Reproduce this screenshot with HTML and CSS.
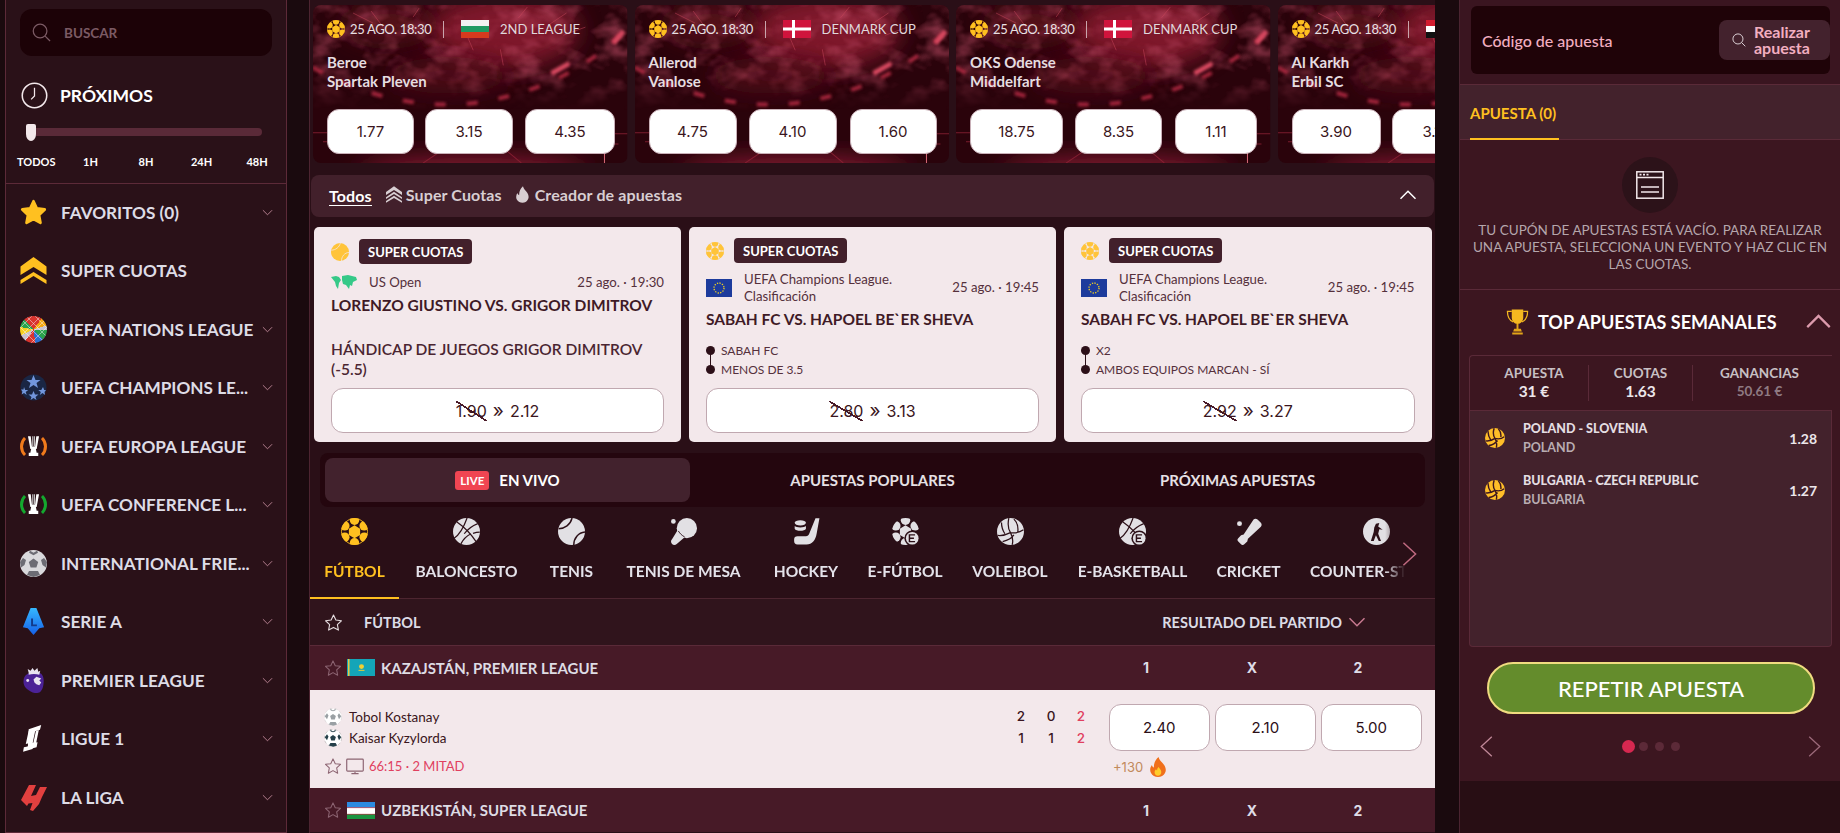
FILE: index.html
```
<!DOCTYPE html>
<html lang="es">
<head>
<meta charset="utf-8">
<title>Apuestas</title>
<link rel="stylesheet" href="styles.css">
</head>
<body>
<svg class="sprite" xmlns="http://www.w3.org/2000/svg">
  <defs>
    <filter id="b2" x="-20%" y="-20%" width="140%" height="140%"><feGaussianBlur stdDeviation="1.6"/></filter>
    <filter id="b12" x="-50%" y="-50%" width="200%" height="200%"><feGaussianBlur stdDeviation="12"/></filter>
    <filter id="cloud" x="0" y="0" width="100%" height="100%"><feTurbulence type="fractalNoise" baseFrequency=".035 .05" numOctaves="3" seed="7"/><feColorMatrix values="0 0 0 0 .6  0 0 0 0 .09  0 0 0 0 .16  2.2 0 0 0 -1"/></filter>
    <linearGradient id="shield" x1="0" y1="0" x2="0" y2="1"><stop offset="0" stop-color="#35b8ff"/><stop offset="1" stop-color="#1660e8"/></linearGradient>
    <linearGradient id="fadeg" x1="0" y1="0" x2="0" y2="1"><stop offset="0" stop-color="#fff"/><stop offset=".6" stop-color="#fff"/><stop offset="1" stop-color="#000"/></linearGradient>
    <mask id="fade"><rect width="314" height="105" fill="url(#fadeg)"/></mask>
    <clipPath id="ballclip"><circle cx="12" cy="12" r="12"/></clipPath>
  </defs>
  <symbol id="fw" viewBox="0 0 314 157" preserveAspectRatio="none">
    <rect width="314" height="157" fill="#2a030b"/>
    <ellipse cx="190" cy="25" rx="75" ry="38" fill="#8e1c30" filter="url(#b12)" opacity=".85"/>
    <ellipse cx="75" cy="18" rx="45" ry="18" fill="#661222" filter="url(#b12)" opacity=".8"/>
    <ellipse cx="135" cy="70" rx="60" ry="18" fill="#5c101e" filter="url(#b12)" opacity=".7"/>
    <ellipse cx="160" cy="168" rx="115" ry="16" fill="#8a1f34" filter="url(#b12)"/>
    <g mask="url(#fade)"><rect width="314" height="105" filter="url(#cloud)" opacity=".6"/></g>
    <path d="M0 62C60 96 120 104 170 96 230 86 282 58 314 22" fill="none" stroke="#b82c44" stroke-width="4" stroke-dasharray="11 21" filter="url(#b2)" opacity=".85"/>
    <path d="M238 68 256 58M300 38l10-12" stroke="#d84860" stroke-width="5" filter="url(#b2)"/>
    <path d="M60 18 40 8M70 22 58 6M100 12l6-9M205 13l9-11M235 20l18-12M250 30l22-8M160 45l-6-14M190 60l-3-16" stroke="#c8485c" stroke-width=".7" opacity=".7"/>
    <path d="M0 127H60M10 136H44M250 128H314M270 138H305M110 157l30-20M208 157l-24-20" stroke="#8e2236" stroke-width="1" opacity=".8"/>
    <path d="M291 146V157" stroke="#d86a78" stroke-width="1"/>
  </symbol>
  <symbol id="ball" viewBox="0 0 24 24">
    <g fill="currentColor" clip-path="url(#ballclip)">
      <polygon points="12,6.500 17,9.500 17,15 12,18 7,15 7,9.500"/>
      <circle cx="12" cy="2" r="4.200"/><circle cx="20.600" cy="7" r="4.200"/><circle cx="20.600" cy="17" r="4.200"/>
      <circle cx="12" cy="22" r="4.200"/><circle cx="3.400" cy="17" r="4.200"/><circle cx="3.400" cy="7" r="4.200"/>
    </g>
    <circle cx="12" cy="12" r="11.600" fill="none" stroke="currentColor" stroke-width=".8"/>
  </symbol>
  <symbol id="basket" viewBox="0 0 24 24">
    <circle cx="12" cy="12" r="12" fill="currentColor"/>
    <path d="M3.500 3.500C10 8 16 14 20.500 21M12.500 0C10 7 7 14 1 18M22 5C17 7 13 10 10 14M7 23c2-4 5-7 9-9M23.800 12.500c-2 0-4 .4-6 1.200" fill="none" stroke="#2c1018" stroke-width="1.100"/>
  </symbol>
  <symbol id="tennis" viewBox="0 0 24 24">
    <circle cx="12" cy="12" r="12" fill="currentColor"/>
    <path d="M.5 9.500C6 9.500 11 6 12.500 0M14 24c0-6 4-11 10-11.500" fill="none" stroke="#2c1018" stroke-width="1.300"/>
  </symbol>
  <symbol id="tennisy" viewBox="0 0 24 24">
    <circle cx="12" cy="12" r="12" fill="currentColor"/>
    <path d="M.5 9.500C6 9.500 11 6 12.500 0M14 24c0-6 4-11 10-11.500" fill="none" stroke="#f3e8eb" stroke-width="1"/>
  </symbol>
  <symbol id="volley" viewBox="0 0 24 24">
    <circle cx="12" cy="12" r="12" fill="currentColor"/>
    <path d="M10.500 .2C9.500 5 10 10 12 13 8 15 4 16 .6 15.500M12 13c4 .5 8 0 11.500-2.500M12 13c2 4 2.500 7.500 1.500 10.800M15 1c3 3 4 7 3.500 11M4 4c0 4 1 7 3 10M5 21c4-1 8-3 10-6" fill="none" stroke="#2c1018" stroke-width="1.100"/>
  </symbol>
  <symbol id="paddle" viewBox="0 0 24 24">
    <circle cx="3" cy="3" r="2.100" fill="currentColor"/>
    <circle cx="15" cy="9" r="9" fill="currentColor"/>
    <path d="M7 10.500L13 17 6 23c-1.300 1.200-3 1.200-4.200 0S.6 20 1.800 18.800z" fill="currentColor"/>
    <path d="M7.400 11.500C9 14 10.500 15.500 13 16.800" fill="none" stroke="#2c1018" stroke-width=".8"/>
  </symbol>
  <symbol id="hockey" viewBox="0 0 24 24">
    <path d="M20 .2h3.500L21 14c-.9 5.600-4 9.500-9 9.500H4c-2 0-3-1.200-3-3V19c0-1.800 1.100-2.800 3-2.800h7.500c1.500 0 2.400-.8 2.900-2.200z" fill="currentColor"/>
    <ellipse cx="6.500" cy="4.300" rx="5" ry="2.300" fill="currentColor"/><path d="M1.500 7.200c1 1.600 9 1.600 10 0V9.500c-1 2.400-9 2.400-10 0z" fill="currentColor"/>
  </symbol>
  <symbol id="efoot" viewBox="0 0 24 24">
    <g fill="currentColor" clip-path="url(#ballclip)">
      <polygon points="12,6.500 17,9.500 17,15 12,18 7,15 7,9.500"/>
      <circle cx="12" cy="2" r="4.200"/><circle cx="20.600" cy="7" r="4.200"/><circle cx="3.400" cy="17" r="4.200"/>
      <circle cx="12" cy="22" r="4.200"/><circle cx="3.400" cy="7" r="4.200"/>
    </g>
    <circle cx="18" cy="18" r="7" fill="#2c1018"/><circle cx="18" cy="18" r="5.600" fill="currentColor"/>
    <path d="M20.500 15h-5v6h5M15.500 18h4" fill="none" stroke="#2c1018" stroke-width="1.300"/>
  </symbol>
  <symbol id="ebasket" viewBox="0 0 24 24">
    <circle cx="12" cy="12" r="12" fill="currentColor"/>
    <path d="M3.500 3.500C10 8 16 14 20.500 21M12.500 0C10 7 7 14 1 18M22 5C17 7 13 10 10 14" fill="none" stroke="#2c1018" stroke-width="1.100"/>
    <circle cx="18" cy="18" r="7" fill="#2c1018"/><circle cx="18" cy="18" r="5.600" fill="currentColor"/>
    <path d="M20.500 15h-5v6h5M15.500 18h4" fill="none" stroke="#2c1018" stroke-width="1.300"/>
  </symbol>
  <symbol id="cricket" viewBox="0 0 24 24">
    <circle cx="4" cy="5" r="2.200" fill="currentColor"/>
    <path d="M16.500 1.300c1-.9 2.500-.9 3.500 0l3 3c.9 1 .9 2.500 0 3.500L11.500 18.500l-.6 2.300-2.900 2.700c-.7.700-1.700.7-2.400 0l-2.900-2.900c-.7-.7-.7-1.700 0-2.400l2.700-2.900 2.300-.6z" fill="currentColor"/>
  </symbol>
  <symbol id="cs" viewBox="0 0 24 24">
    <circle cx="12" cy="12" r="12" fill="currentColor"/>
    <path d="M11.500 5l3-.5-1 3 4 3-3-.6-1 4 2.500 6.500h-2l-2.500-5-2 5H7l2.500-8 .5-4z" fill="#2c1018"/>
  </symbol>
  <symbol id="volleyy" viewBox="0 0 24 24">
    <circle cx="12" cy="12" r="12" fill="currentColor"/>
    <path d="M11 .2C9.500 5 9.500 9 12 12.500 8.500 15 5 16 .8 15.500M12 12.500c4 1 8 .5 11-2M12 12.500c2 3.500 2.500 7.500 1.500 11M16 .8c2.500 3 3.500 6.500 3 10M3.800 3.800C3.500 7.500 4.500 11 7 14.500M4.500 21c4-.5 8-2.500 10.500-6" fill="none" stroke="#3c1620" stroke-width="1.700"/>
  </symbol>
  <symbol id="star" viewBox="0 0 24 24">
    <path d="M12 2.500l3 6.400 7 .9-5.100 4.800 1.300 7-6.200-3.400-6.200 3.400 1.300-7L2 9.800l7-.9z" fill="none" stroke="currentColor" stroke-width="1.400" stroke-linejoin="round"/>
  </symbol>
  <symbol id="starfill" viewBox="0 0 24 24">
    <path d="M12 2l3 6.400 7 .9-5.100 4.900 1.300 7L12 17.800l-6.200 3.400 1.300-7L2 9.300l7-.9z" fill="#ffc020" stroke="#ffc020" stroke-width="2.400" stroke-linejoin="round"/>
  </symbol>
  <symbol id="chev" viewBox="0 0 24 24">
    <path d="M2 7l10 10L22 7" fill="none" stroke="currentColor" stroke-width="2"/>
  </symbol>
  <symbol id="chevr" viewBox="0 0 16 26">
    <path d="M1.500 1l13 12-13 12" fill="none" stroke="currentColor" stroke-width="1.600"/>
  </symbol>
  <symbol id="chevl" viewBox="0 0 16 26">
    <path d="M14.500 1L1.500 13l13 12" fill="none" stroke="currentColor" stroke-width="1.600"/>
  </symbol>
  <symbol id="search" viewBox="0 0 20 20">
    <circle cx="8.500" cy="8.500" r="7.200" fill="none" stroke="currentColor" stroke-width="1.300"/><path d="M13.800 13.800L19 19" stroke="currentColor" stroke-width="1.300"/>
  </symbol>
  <symbol id="clock" viewBox="0 0 28 28">
    <circle cx="14" cy="14" r="12.700" fill="none" stroke="currentColor" stroke-width="1.600"/>
    <path d="M14 6v8.500l-3.500 3.500" fill="none" stroke="currentColor" stroke-width="1.300"/>
  </symbol>
  <symbol id="super" viewBox="0 0 26 27">
    <path d="M0 9.500L13 0l13 9.500V18L13 10 0 18z" fill="currentColor"/><path d="M0 23L13 15l13 8v4L13 19 0 27z" fill="currentColor"/>
  </symbol>
  <symbol id="superlt" viewBox="0 0 26 27">
    <path d="M0 9.500L13 0l13 9.500v5L13 6 0 14.500z" fill="currentColor"/><path d="M0 18L13 9l13 9v3L13 12.500 0 21zM0 24L13 15.500l13 8.500v3L13 19 0 27z" fill="currentColor"/>
  </symbol>
  <symbol id="flame" viewBox="0 0 14 18">
    <path d="M7.500 0c.5 3 3 4.500 4.800 7.500 1.500 2.700 1.700 5 .5 7C11.600 16.800 9.500 18 7 18s-4.700-1.200-6-3.300c-1.300-2.300-1-5 .6-7.200.3 1.200 1 2 1.800 2.300C3.200 6 4.700 2.500 7.500 0z" fill="currentColor"/>
  </symbol>
  <symbol id="world" viewBox="0 0 26 15">
    <path d="M0 2l5-1 3 1 2 3-2 3-1 6-2-3-1-4zM11 1l6-1 8 2 1 3-4 2-1 4-2-1-1 4-3-4-3-1-1-4z" fill="#35c988"/>
  </symbol>
  <symbol id="fbg" viewBox="0 0 28 18" preserveAspectRatio="none"><rect width="28" height="6" fill="#f2f2f2"/><rect y="6" width="28" height="6" fill="#1f9a62"/><rect y="12" width="28" height="6" fill="#d63a1e"/></symbol>
  <symbol id="fdk" viewBox="0 0 28 18" preserveAspectRatio="none"><rect width="28" height="18" fill="#d0143c"/><rect x="9" width="3" height="18" fill="#fff"/><rect y="7.500" width="28" height="3" fill="#fff"/></symbol>
  <symbol id="fiq" viewBox="0 0 28 18" preserveAspectRatio="none"><rect width="28" height="6" fill="#d41c30"/><rect y="6" width="28" height="6" fill="#fff"/><rect y="12" width="28" height="6" fill="#111"/></symbol>
  <symbol id="feu" viewBox="0 0 26 18" preserveAspectRatio="none"><rect width="26" height="18" fill="#1d3b9c"/><circle cx="13" cy="9" r="5" fill="none" stroke="#f0d020" stroke-width="1.300" stroke-dasharray="1.300 1.300"/></symbol>
  <symbol id="fkz" viewBox="0 0 28 18" preserveAspectRatio="none"><rect width="28" height="18" fill="#14a5b8"/><rect x="1" width="1.500" height="18" fill="#e8c840"/><circle cx="14.500" cy="8" r="2.500" fill="#f2d030"/><path d="M11.500 12h6" stroke="#f2d030"/></symbol>
  <symbol id="fuz" viewBox="0 0 28 18" preserveAspectRatio="none"><rect width="28" height="6" fill="#2b8ae0"/><rect y="6" width="28" height="7" fill="#fff"/><rect y="13" width="28" height="5" fill="#1a9440"/><path d="M0 6h28M0 13h28" stroke="#c62838" stroke-width=".6"/></symbol>
  <symbol id="tlight" viewBox="0 0 24 24">
    <circle cx="12" cy="12" r="11.500" fill="#fff" stroke="#ccc" stroke-width=".6" stroke-dasharray="4 3"/>
    <polygon points="12,8 15.800,10.800 14.400,15.200 9.600,15.200 8.200,10.800" fill="#9aa0a4"/><path d="M8 .8l4 2.400 4-2.400-1 2.400-3 1-3-1zM1 11l3-4 2 3-2 5zM23 11l-3-4-2 3 2 5zM6.500 22l2-3.500h7l2 3.500-5.500 1.500z" fill="#9aa0a4"/>
  </symbol>
  <symbol id="tdark" viewBox="0 0 24 24">
    <circle cx="12" cy="12" r="11.500" fill="#fff" stroke="#999" stroke-width=".6" stroke-dasharray="4 3"/>
    <polygon points="12,8 15.800,10.800 14.400,15.200 9.600,15.200 8.200,10.800" fill="#25404a"/><path d="M8 .8l4 2.400 4-2.400-1 2.400-3 1-3-1zM1 11l3-4 2 3-2 5zM23 11l-3-4-2 3 2 5zM6.500 22l2-3.500h7l2 3.500-5.500 1.500z" fill="#25404a"/>
  </symbol>
  <symbol id="tv" viewBox="0 0 20 18">
    <rect x=".8" y=".8" width="18.400" height="13.400" rx="1" fill="none" stroke="currentColor" stroke-width="1.300"/><path d="M6 17h8M10 15v2" stroke="currentColor" stroke-width="1.300"/>
  </symbol>
  <symbol id="fire" viewBox="0 0 16 20">
    <path d="M8.500 0c.8 3.400 3.600 5 5.800 8.300 1.800 3 1.900 5.700.7 7.800C13.700 18.600 11 20 8 20s-5.700-1.400-7-3.900C-.4 13.500 0 10.500 1.900 8c.3 1.400 1.100 2.300 2 2.600C3.600 6.500 5.400 2.700 8.500 0z" fill="#f0701c"/>
    <path d="M8.500 10c.8 1.600 2.800 2.500 2.800 5 0 2.200-1.500 3.800-3.400 3.800S4.600 17.300 4.600 15.300c0-1.300.7-2.400 1.500-3 .2.700.5 1 1 1.100 0-1.300.5-2.500 1.400-3.400z" fill="#ffcd2a"/>
  </symbol>
  <symbol id="slip" viewBox="0 0 28 28">
    <rect x=".8" y=".8" width="26.400" height="26.400" fill="none" stroke="currentColor" stroke-width="1.500"/>
    <path d="M1 6.500h26M5 16h18M5 21h18" stroke="currentColor" stroke-width="1.400"/><path d="M3.500 3.700h2M7 3.700h2M10.500 3.700h2" stroke="currentColor" stroke-width="1.800"/>
  </symbol>
  <symbol id="trophy" viewBox="0 0 24 28">
    <path d="M6 1h12v8c0 4-2.500 7-6 7S6 13 6 9z" fill="#f5b820"/>
    <path d="M6 3H1.500c0 5 1.500 9 6 11M18 3h4.500c0 5-1.500 9-6 11" fill="none" stroke="#f5b820" stroke-width="1.300"/>
    <path d="M11 16h2v5h-2zM8.500 21h7l1 3h-9zM6.500 25h11v2h-11z" fill="#e2a418"/>
  </symbol>
  <symbol id="t-white" viewBox="0 0 24 28">
    <path d="M5 1h3.500l1.500 13h4l1.500-13H19l-3 16H8z" fill="#fff"/><path d="M10.500 1h1.200v13h-1.200zM12.500 1h1.200v13h-1.200z" fill="#e0e0e0"/>
    <path d="M9 17h6l1 5h2v4H6v-4h2z" fill="#fff"/>
  </symbol>
  <symbol id="i-ucl" viewBox="0 0 27 27">
    <circle cx="13.500" cy="13.500" r="13" fill="#1a2644"/>
    <path d="M13.500 1l2 5h5l-4 3 1.500 5-4.500-3-4.500 3 1.500-5-4-3h5zM4 13l1.200 3h3l-2.500 2 1 3-2.700-2-2.400 1.500.8-3L1 15.500h2.500zM23 13l1.200 3h1.800l-1.500 2 .6 3-2.600-2-2.700 2 1-3-2.500-2h3zM13.500 17l1.500 3.500h3.500L15.500 23l1 3-3-2-3 2 1-3-3-2.500h3.500z" fill="#7296dc"/>
  </symbol>
  <symbol id="i-intl" viewBox="0 0 27 27">
    <circle cx="13.500" cy="13.500" r="13.500" fill="#d9d9dc"/>
    <path d="M13.500 8.500l4.700 3.400-1.800 5.600h-5.800l-1.800-5.600zM10 .7l3.500 2 3.500-2 1 2-4.500 2.500L9 2.700zM0 12l3-4 3 2-1.500 5-3.500 2.500zM27 12l-3-4-3 2 1.500 5 3.500 2.500zM7 25l2-4h9l2 4-6.500 2z" fill="#6c6c74"/>
  </symbol>
  <symbol id="i-serie" viewBox="0 0 24 28">
    <path d="M9 0h6l8 20-5 1-6 7-6-7-5-1z" fill="url(#shield)"/>
    <path d="M10.500 11v7h5" fill="none" stroke="#123a8a" stroke-width="2"/>
  </symbol>
  <symbol id="i-prem" viewBox="0 0 24 28">
    <path d="M6 7c3-2 10-3 14 0 3 3 3 8 2 13-1 4-3 7-6 7-4 0-6-1-9-3C2 21 1 17 2 12c.5-2 2-4 4-5z" fill="#4b2296"/>
    <path d="M7 6L6 2l3 2 2-3 2 3 3-3 1 4 2-1-1 4c-3-1-8-1-11 0zM15 10l5 2-2 2 2 2-2 3-3-1-2-2-1-3z" fill="#e8e4f0"/><circle cx="6" cy="14" r="1.500" fill="#e8e4f0"/>
  </symbol>
  <symbol id="i-ligue" viewBox="0 0 20 28">
    <path d="M5 4.500L18 0l-1.300 5-5 1.500-2.500 12 5-.5-1 5-4 1-6 1.600 1-4z" fill="#fff"/>
    <path d="M5 6l3-.8L5 19l-3 .8zM12.500 6.300l3-1-2.800 13.500-3 .3zM0 23l10-2-1 4-9.800 2.800z" fill="#fff"/>
  </symbol>
  <symbol id="i-liga" viewBox="0 0 27 27">
    <path d="M9 1h7l-5 11 5-1 4-8h7l-5 10-3 7-6 7-3-1 2.500-7-4 .5-1.500 2.500-3-3-3-3z" fill="#e2403f"/>
  </symbol>
</svg>

<div class="app">
  <aside class="sidebar">
    <div class="search"><svg class="i-search"><use href="#search"/></svg><span>BUSCAR</span></div>
    <div class="soon">
      <div class="soon-head"><svg class="i-clock"><use href="#clock"/></svg><strong>PRÓXIMOS</strong></div>
      <div class="track"><span class="thumb"></span></div>
      <div class="ticks"><span>TODOS</span><span>1H</span><span>8H</span><span>24H</span><span>48H</span></div>
    </div>
    <nav class="menu">
      <a class="menu-row"><svg class="m-icon"><use href="#starfill"/></svg><span>FAVORITOS (0)</span><svg class="m-chev"><use href="#chev"/></svg></a>
      <a class="menu-row"><svg class="m-icon m-yellow"><use href="#super"/></svg><span>SUPER CUOTAS</span></a>
      <a class="menu-row"><i class="m-icon nations"></i><span>UEFA NATIONS LEAGUE</span><svg class="m-chev"><use href="#chev"/></svg></a>
      <a class="menu-row"><svg class="m-icon"><use href="#i-ucl"/></svg><span>UEFA CHAMPIONS LE...</span><svg class="m-chev"><use href="#chev"/></svg></a>
      <a class="menu-row"><i class="m-icon hexring"><svg><use href="#t-white"/></svg></i><span>UEFA EUROPA LEAGUE</span><svg class="m-chev"><use href="#chev"/></svg></a>
      <a class="menu-row"><i class="m-icon greenring"><svg><use href="#t-white"/></svg></i><span>UEFA CONFERENCE L...</span><svg class="m-chev"><use href="#chev"/></svg></a>
      <a class="menu-row"><svg class="m-icon"><use href="#i-intl"/></svg><span>INTERNATIONAL FRIE...</span><svg class="m-chev"><use href="#chev"/></svg></a>
      <a class="menu-row"><svg class="m-icon"><use href="#i-serie"/></svg><span>SERIE A</span><svg class="m-chev"><use href="#chev"/></svg></a>
      <a class="menu-row"><svg class="m-icon"><use href="#i-prem"/></svg><span>PREMIER LEAGUE</span><svg class="m-chev"><use href="#chev"/></svg></a>
      <a class="menu-row"><svg class="m-icon"><use href="#i-ligue"/></svg><span>LIGUE 1</span><svg class="m-chev"><use href="#chev"/></svg></a>
      <a class="menu-row"><svg class="m-icon"><use href="#i-liga"/></svg><span>LA LIGA</span><svg class="m-chev"><use href="#chev"/></svg></a>
    </nav>
  </aside>

  <main class="main">
    <section class="hero-row">
      <article class="hero w1">
        <svg class="hero-bg"><use href="#fw"/></svg>
        <div class="hero-meta"><svg class="h-ball"><use href="#ball"/></svg><span class="h-date">25 AGO. 18:30</span><i class="h-sep"></i><svg class="h-flag"><use href="#fbg"/></svg><span class="h-lg">2ND LEAGUE</span></div>
        <div class="hero-teams">Beroe<br>Spartak Pleven</div>
        <div class="hero-odds"><button class="o1">1.77</button><button class="o2">3.15</button><button class="o3">4.35</button></div>
      </article>
      <article class="hero w2">
        <svg class="hero-bg"><use href="#fw"/></svg>
        <div class="hero-meta"><svg class="h-ball"><use href="#ball"/></svg><span class="h-date">25 AGO. 18:30</span><i class="h-sep"></i><svg class="h-flag"><use href="#fdk"/></svg><span class="h-lg">DENMARK CUP</span></div>
        <div class="hero-teams">Allerod<br>Vanlose</div>
        <div class="hero-odds"><button class="o1">4.75</button><button class="o2">4.10</button><button class="o3">1.60</button></div>
      </article>
      <article class="hero w3">
        <svg class="hero-bg"><use href="#fw"/></svg>
        <div class="hero-meta"><svg class="h-ball"><use href="#ball"/></svg><span class="h-date">25 AGO. 18:30</span><i class="h-sep"></i><svg class="h-flag"><use href="#fdk"/></svg><span class="h-lg">DENMARK CUP</span></div>
        <div class="hero-teams">OKS Odense<br>Middelfart</div>
        <div class="hero-odds"><button class="o4">18.75</button><button class="o5">8.35</button><button class="o6">1.11</button></div>
      </article>
      <article class="hero w4">
        <svg class="hero-bg"><use href="#fw"/></svg>
        <div class="hero-meta"><svg class="h-ball"><use href="#ball"/></svg><span class="h-date">25 AGO. 18:30</span><i class="h-sep"></i><svg class="h-flag"><use href="#fiq"/></svg></div>
        <div class="hero-teams">Al Karkh<br>Erbil SC</div>
        <div class="hero-odds"><button class="o7">3.90</button><button class="o7">3.15</button></div>
      </article>
    </section>

    <div class="filter-bar">
      <a class="f-item f-active">Todos</a>
      <a class="f-item"><svg class="f-super"><use href="#superlt"/></svg>Super Cuotas</a>
      <a class="f-item"><svg class="f-flame"><use href="#flame"/></svg>Creador de apuestas</a>
      <svg class="f-up"><use href="#chev"/></svg>
    </div>

    <section class="promos">
      <article class="promo p-short">
        <div class="promo-head"><svg class="p-sport"><use href="#tennisy"/></svg><span class="badge">SUPER CUOTAS</span></div>
        <div class="promo-meta"><svg class="p-world"><use href="#world"/></svg><span class="p-league">US Open</span><span class="p-date">25 ago. · 19:30</span></div>
        <h3 class="p-title">LORENZO GIUSTINO VS. GRIGOR DIMITROV</h3>
        <p class="p-bet">HÁNDICAP DE JUEGOS GRIGOR DIMITROV<br>(-5.5)</p>
        <button class="p-btn"><s class="old">1.90</s><b class="gt">»</b>2.12</button>
      </article>
      <article class="promo">
        <div class="promo-head"><svg class="p-sport"><use href="#ball"/></svg><span class="badge">SUPER CUOTAS</span></div>
        <div class="promo-meta"><svg class="p-flag"><use href="#feu"/></svg><span class="p-league">UEFA Champions League.<br>Clasificación</span><span class="p-date">25 ago. · 19:45</span></div>
        <h3 class="p-title">SABAH FC VS. HAPOEL BE`ER SHEVA</h3>
        <ul class="legs"><li>SABAH FC</li><li>MENOS DE 3.5</li></ul>
        <button class="p-btn"><s class="old">2.80</s><b class="gt">»</b>3.13</button>
      </article>
      <article class="promo">
        <div class="promo-head"><svg class="p-sport"><use href="#ball"/></svg><span class="badge">SUPER CUOTAS</span></div>
        <div class="promo-meta"><svg class="p-flag"><use href="#feu"/></svg><span class="p-league">UEFA Champions League.<br>Clasificación</span><span class="p-date">25 ago. · 19:45</span></div>
        <h3 class="p-title">SABAH FC VS. HAPOEL BE`ER SHEVA</h3>
        <ul class="legs"><li>X2</li><li>AMBOS EQUIPOS MARCAN - SÍ</li></ul>
        <button class="p-btn"><s class="old">2.92</s><b class="gt">»</b>3.27</button>
      </article>
    </section>

    <div class="tabs">
      <a class="tab tab-on"><span class="live">LIVE</span>EN VIVO</a>
      <a class="tab">APUESTAS POPULARES</a>
      <a class="tab">PRÓXIMAS APUESTAS</a>
    </div>

    <div class="sports-wrap">
      <div class="sports">
        <a class="sport sport-on"><svg><use href="#ball"/></svg><span>FÚTBOL</span></a>
        <a class="sport"><svg><use href="#basket"/></svg><span>BALONCESTO</span></a>
        <a class="sport"><svg><use href="#tennis"/></svg><span>TENIS</span></a>
        <a class="sport"><svg><use href="#paddle"/></svg><span>TENIS DE MESA</span></a>
        <a class="sport"><svg><use href="#hockey"/></svg><span>HOCKEY</span></a>
        <a class="sport"><svg><use href="#efoot"/></svg><span>E-FÚTBOL</span></a>
        <a class="sport"><svg><use href="#volley"/></svg><span>VOLEIBOL</span></a>
        <a class="sport"><svg><use href="#ebasket"/></svg><span>E-BASKETBALL</span></a>
        <a class="sport"><svg><use href="#cricket"/></svg><span>CRICKET</span></a>
        <a class="sport"><svg><use href="#cs"/></svg><span>COUNTER-STRIKE</span></a>
      </div>
      <svg class="sports-next"><use href="#chevr"/></svg>
    </div>

    <div class="list-head">
      <svg class="lh-star"><use href="#star"/></svg><span class="lh-name">FÚTBOL</span>
      <span class="lh-market">RESULTADO DEL PARTIDO</span><svg class="lh-chev"><use href="#chev"/></svg>
    </div>

    <div class="league">
      <svg class="lg-star"><use href="#star"/></svg><svg class="lg-flag"><use href="#fkz"/></svg><span class="lg-name">KAZAJSTÁN, PREMIER LEAGUE</span>
      <div class="lg-cols"><span>1</span><span>X</span><span>2</span></div>
    </div>

    <div class="match">
      <div class="m-left">
        <div class="team"><svg><use href="#tlight"/></svg>Tobol Kostanay</div>
        <div class="team"><svg><use href="#tdark"/></svg>Kaisar Kyzylorda</div>
        <div class="m-status"><svg class="st-star"><use href="#star"/></svg><svg class="st-tv"><use href="#tv"/></svg><span>66:15 · 2 MITAD</span></div>
      </div>
      <div class="scores">
        <span>2</span><span>0</span><span class="red">2</span>
        <span>1</span><span>1</span><span class="red">2</span>
      </div>
      <div class="m-right">
        <div class="m-odds"><button class="odd">2.40</button><button class="odd">2.10</button><button class="odd">5.00</button></div>
        <div class="more">+130<svg><use href="#fire"/></svg></div>
      </div>
    </div>

    <div class="league">
      <svg class="lg-star"><use href="#star"/></svg><svg class="lg-flag"><use href="#fuz"/></svg><span class="lg-name">UZBEKISTÁN, SUPER LEAGUE</span>
      <div class="lg-cols"><span>1</span><span>X</span><span>2</span></div>
    </div>
  </main>

  <aside class="slip">
    <div class="code-sec">
      <div class="code-box">
        <span class="code-label">Código de apuesta</span>
        <button class="code-btn"><svg><use href="#search"/></svg><span>Realizar<br>apuesta</span></button>
      </div>
    </div>
    <div class="slip-tabs"><a class="slip-tab">APUESTA (0)</a></div>
    <div class="panel">
      <div class="empty">
        <div class="empty-circle"><svg><use href="#slip"/></svg></div>
        <p>TU CUPÓN DE APUESTAS ESTÁ VACÍO. PARA REALIZAR<br>UNA APUESTA, SELECCIONA UN EVENTO Y HAZ CLIC EN<br>LAS CUOTAS.</p>
      </div>
      <div class="top-head"><svg class="trophy"><use href="#trophy"/></svg><h2>TOP APUESTAS SEMANALES</h2><svg class="top-chev"><use href="#chev"/></svg></div>
      <div class="stats">
        <div class="stat"><small>APUESTA</small><b>31 €</b></div>
        <div class="stat"><small>CUOTAS</small><b>1.63</b></div>
        <div class="stat"><small>GANANCIAS</small><em>50.61 €</em></div>
      </div>
      <div class="picks">
        <div class="pick"><svg><use href="#volleyy"/></svg><div class="pick-txt"><strong>POLAND - SLOVENIA</strong><span>POLAND</span></div><b>1.28</b></div>
        <div class="pick"><svg><use href="#volleyy"/></svg><div class="pick-txt"><strong>BULGARIA - CZECH REPUBLIC</strong><span>BULGARIA</span></div><b>1.27</b></div>
      </div>
      <button class="repeat">REPETIR APUESTA</button>
      <div class="pager">
        <svg class="pg-arrow pg-l"><use href="#chevl"/></svg>
        <div class="dots"><i class="dot dot-on"></i><i class="dot"></i><i class="dot"></i><i class="dot"></i></div>
        <svg class="pg-arrow pg-r"><use href="#chevr"/></svg>
      </div>
    </div>
  </aside>
</div>
</body>
</html>
```
FILE: styles.css
```
* { box-sizing: border-box; margin: 0; padding: 0; }
html, body { width: 1840px; height: 833px; overflow: hidden; }
body { background: #1a0a0e; font-family: "Lato", "Noto Sans", sans-serif; color: #e0dce2; }
a { display: flex; }
button { font-family: inherit; cursor: pointer; }
svg { display: block; }
.sprite { position: absolute; width: 0; height: 0; overflow: hidden; }

.app { display: grid; grid-template-columns: 282px 1148px 405px; width: 1840px; height: 833px; padding-left: 5px; }
.main { margin-left: 22px; width: 1126px; background: #2a0f17; border-left: 1px solid #4c2430; height: 833px; overflow: hidden; }

/* sidebar */
.sidebar { width: 282px; height: 833px; background: #2a1118; border: 1px solid #5c2a38; border-top: 0; overflow: hidden; }
.search { display: flex; align-items: center; margin: 9px 14px 0 14px; height: 47px; background: #1c0207; border-radius: 12px; padding-left: 12px; color: #7b5a64; font-size: 13.5px; font-weight: 700; }
.i-search { width: 19px; height: 19px; margin-right: 13px; }
.soon { height: 128px; padding: 26px 0 0 15px; border-bottom: 1px solid #5c2a38; }
.soon-head { display: flex; align-items: center; gap: 12px; color: #fff; height: 27px; }
.i-clock { width: 27px; height: 27px; color: #f3e8eb; }
.soon-head strong { font-weight: 700; font-size: 17.5px; }
.track { position: relative; margin: 19px 0 0 9px; width: 232px; height: 8px; border-radius: 4px; background: #5a2a38; }
.thumb { position: absolute; left: -4px; top: -4px; width: 10px; height: 17px; background: #f3e8eb; border-radius: 2px 2px 5px 5px / 2px 2px 7px 7px; }
.ticks { display: flex; justify-content: space-between; margin: 19px 0 0 -4px; width: 258px; color: #fff; font-size: 11px; font-weight: 700; line-height: 14px; }
.ticks span { width: 36px; text-align: center; }
.menu { display: block; margin-top: -1px; }
.menu-row { align-items: center; height: 58.5px; padding-left: 14px; font-size: 17.2px; font-weight: 700; color: #dedce6; white-space: nowrap; }
.menu-row span { margin-left: 14px; flex: 1; }
.m-icon { width: 27px; height: 27px; flex: none; display: block; }
.m-yellow { color: #ffc020; }
.m-chev { width: 11px; height: 11px; color: #c08898; margin-right: 13px; flex: none; }
.nations { border-radius: 50%; background: repeating-linear-gradient(45deg, transparent 0 5px, rgba(255,255,255,.45) 5px 6px), repeating-linear-gradient(-45deg, transparent 0 5px, rgba(255,255,255,.45) 5px 6px), conic-gradient(#d8342e 0 10%, #f5a812 0 20%, #c9c4d0 0 26%, #2aa24c 0 38%, #2b6fd0 0 48%, #d8342e 0 60%, #c9c4d0 0 68%, #f5d022 0 78%, #2aa24c 0 88%, #d8342e 0); }
.hexring { border: 3px solid #f07a1c; border-radius: 50%; border-top-color: transparent; border-bottom-color: transparent; }
.greenring { border: 3px solid #14a82e; border-radius: 50%; border-top-color: transparent; border-bottom-color: transparent; }
.hexring svg, .greenring svg { width: 19px; height: 27px; margin: -3px 0 0 1px; }

/* hero */
.hero-row { display: flex; gap: 7px; padding: 5px 0 0 3px; height: 175px; width: 1125px; overflow: hidden; }
.hero { position: relative; flex: none; height: 158px; border-radius: 8px; overflow: hidden; width: 314.5px; padding: 15px 0 0 14px; }
.hero-bg { position: absolute; left: 0; top: 0; width: 100%; height: 100%; }
.hero > div { position: relative; }
.hero-meta { display: flex; align-items: center; height: 18px; white-space: nowrap; }
.h-ball { width: 18px; height: 18px; color: #ffc020; flex: none; }
.h-date { margin-left: 5px; font-size: 13px; letter-spacing: -.35px; color: #e8e0e3; width: 81px; flex: none; }
.h-sep { width: 1px; height: 17px; background: #c9a5ad; margin-left: 12px; flex: none; }
.h-flag { width: 28px; height: 18px; margin-left: 17px; flex: none; }
.h-lg { margin-left: 11px; font-size: 13px; color: #e0d8dc; }
.hero-teams { margin-top: 15px; font-size: 15px; line-height: 19px; font-weight: 700; color: #e6dde0; }
.hero-odds { display: flex; position: absolute !important; top: 104px; left: 14px; }
.hero-odds button { flex: none; height: 45px; background: #fff; border: 1px solid #c9b0b8; border-radius: 12px; font-family: "Inter", sans-serif; font-size: 15px; color: #3a1520; }
.o1 { width: 87px; } .o2 { width: 88px; margin-left: 11px; } .o3 { width: 90px; margin-left: 12px; }
.w2 .o1 { width: 88px; } .w2 .o2 { width: 88px; margin-left: 12px; } .w2 .o3 { width: 87px; margin-left: 13px; }
.o4 { width: 93px; } .o5 { width: 87px; margin-left: 12px; } .o6 { width: 82px; margin-left: 13px; }
.o7 { width: 89px; margin-right: 11px; }

/* filter bar */
.filter-bar { display: flex; align-items: center; margin: 0 1px; height: 42px; background: #42202b; border-radius: 8px; padding: 0 0 3px 18px; }
.f-item { align-items: center; color: #d8ced2; font-size: 16px; letter-spacing: .12px; font-weight: 700; margin-right: 14px; white-space: nowrap; }
.f-active { color: #fff; border-bottom: 1px solid #fff; height: 21px; margin-top: 2px; }
.f-super { width: 16px; height: 17px; margin-right: 4px; }
.f-flame { width: 13px; height: 17px; margin-right: 6px; }
.f-up { width: 18px; height: 18px; margin-left: auto; margin-right: 17px; color: #fff; transform: rotate(180deg); }

/* promos */
.promos { display: flex; gap: 8px; padding: 10px 0 0 4px; height: 236px; }
.promo { display: flex; flex-direction: column; width: 367px; height: 215px; background: #f3e8eb; border-radius: 5px; padding: 11px 17px 9px; color: #3a1520; }
.promo:last-child { width: 367.5px; }
.promo-head { display: flex; align-items: center; gap: 10px; height: 25px; flex: none; }
.p-short .promo-head { margin-top: 1px; }
.p-sport { width: 18px; height: 18px; color: #ffc43a; }
.badge { display: flex; align-items: center; height: 25px; padding: 0 9px; background: #42202b; color: #fff; font-size: 13px; font-weight: 700; border-radius: 4px; }
.promo-meta { display: flex; align-items: center; flex: none; margin-top: 7px; height: 35px; font-size: 13.2px; color: #55303c; line-height: 17px; }
.p-short .promo-meta { margin-top: 6px; height: 24px; }
.p-world { width: 26px; height: 15px; margin-right: 12px; }
.p-flag { width: 26px; height: 18px; margin-right: 12px; }
.p-date { margin-left: auto; }
.p-title { flex: none; margin-top: 3px; font-size: 15.5px; line-height: 22px; font-weight: 700; white-space: nowrap; color: #3f1a26; }
.p-short .p-title { margin-top: 0; }
.p-bet { margin-top: 23px; font-size: 15.5px; line-height: 20px; font-weight: 600; color: #4a2531; }
.legs { list-style: none; margin-top: 11px; font-size: 12px; line-height: 19px; color: #55303c; }
.legs li { position: relative; padding-left: 15px; }
.legs li::before { content: ""; position: absolute; left: 0; top: 5px; width: 9px; height: 9px; border-radius: 50%; background: #2c0f18; }
.legs li:first-child::after { content: ""; position: absolute; left: 4px; top: 10px; width: 1px; height: 19px; background: #2c0f18; }
.p-btn { flex: none; margin-top: auto; height: 45px; background: #fff; border: 1px solid #c0a8b0; border-radius: 12px; font-size: 16px; color: #3a1520; font-family: "Inter", sans-serif; }
.old { text-decoration: none; background: linear-gradient(to top right, transparent 47%, #4a1a28 47% 52%, transparent 52%); }
.gt { display: inline-block; font-weight: 400; font-size: 19px; line-height: 16px; margin: 0 6px; }

/* tabs */
.tabs { display: grid; grid-template-columns: 365px 365px 365px; margin: 0 0 0 10px; width: 1105px; height: 54px; padding: 5px; background: #24060e; border-radius: 8px; }
.tab { align-items: center; justify-content: center; font-size: 15px; font-weight: 700; color: #e6e0e4; border-radius: 8px; }
.tab-on { background: #42222d; color: #fff; }
.live { display: flex; align-items: center; justify-content: center; width: 34px; height: 19px; margin-right: 10px; background: #f04552; border-radius: 3px; font-size: 11.5px; color: #fff; font-weight: 700; }

/* sports */
.sports-wrap { position: relative; height: 92px; border-bottom: 1px solid #4d2530; }
.sports { display: grid; grid-template-columns: 89px 135px 75px 149px 96px 102px 108px 137px 95px 160px; width: 1095px; overflow: hidden; -webkit-mask-image: linear-gradient(to right, #000 1075px, transparent 1095px); mask-image: linear-gradient(to right, #000 1075px, transparent 1095px); height: 92px; }
.sport { flex-direction: column; align-items: center; padding-top: 11px; height: 91px; color: #e4e2ea; font-size: 15.5px; font-weight: 700; white-space: nowrap; }
.sport svg { width: 27px; height: 27px; color: #e2e0e4; margin-bottom: 17px; }
.sport-on { color: #ffc020; box-shadow: inset 0 -2px 0 #ffc020; height: 92px; }
.sport-on svg { color: #ffc020; }
.sports-next { position: absolute; right: 18px; top: 34px; width: 15px; height: 26px; color: #c06a80; }

/* list head */
.list-head { display: flex; align-items: center; height: 46px; background: #30141c; padding: 0 0 0 14px; font-size: 14.5px; font-weight: 700; color: #dcdce6; }
.lh-star { width: 19px; height: 19px; color: #e6dde0; }
.lh-name { margin-left: 21px; }
.lh-market { margin-left: auto; }
.lh-chev { width: 18px; height: 18px; color: #c87a90; margin: 0 69px 0 6px; }

/* league */
.league { display: flex; align-items: center; height: 45px; background: #471a27; padding: 0 0 1px 14px; border-top: 1px solid #5a2a38; }
.league:last-child { border-top: 0; height: 44px; padding-bottom: 0; }
.lg-star { width: 18px; height: 18px; color: #8c6472; }
.lg-flag { width: 28px; height: 17px; margin-left: 5px; }
.lg-name { margin-left: 6px; font-size: 15px; font-weight: 700; color: #dedce4; white-space: nowrap; }
.lg-cols { display: grid; grid-template-columns: 106px 106px 106px; margin-left: auto; margin-right: 24px; font-family: "Inter", sans-serif; font-size: 14px; font-weight: 700; text-align: center; color: #dedce6; }

/* match */
.match { display: flex; height: 98px; background: #f3e8eb; padding-left: 14px; color: #3a1520; }
.m-left { flex: 1; padding-top: 16px; }
.team { display: flex; align-items: center; height: 21.5px; font-size: 13.5px; }
.team svg { width: 18px; height: 18px; margin-right: 7px; }
.m-status { display: flex; align-items: center; margin-top: 7px; height: 20px; color: #e0405f; font-size: 13px; }
.st-star { width: 18px; height: 18px; color: #8c6472; margin-right: 4px; }
.st-tv { width: 18px; height: 17px; color: #8c6472; margin-right: 5px; }
.scores { display: grid; grid-template-columns: 30px 30px 30px; grid-auto-rows: 22px; width: 92px; margin: 15px 11px 0 0; text-align: center; font-family: "Inter", sans-serif; font-size: 13.5px; line-height: 22px; font-weight: 500; color: #3a1520; }
.red { color: #e0405f; }
.m-right { width: 326px; padding-top: 14px; }
.m-odds { display: flex; gap: 5.5px; }
.odd { width: 100.5px; height: 47px; background: #fff; border: 1px solid #c0a8b0; border-radius: 12px; font-family: "Inter", sans-serif; font-size: 15px; color: #2c0f18; }
.more { display: flex; align-items: center; margin: 6px 0 0 4px; font-size: 13px; color: #c28a5c; font-family: "Inter", sans-serif; }
.more svg { width: 16px; height: 20px; margin-left: 7px; }

/* slip */
.slip { margin-left: 24px; width: 381px; height: 833px; background: #280e14; border-left: 1px solid #4a2430; }
.code-sec { height: 85px; padding: 6px 10px 0 11px; border-bottom: 1px solid #5a2a38; background: #3a1520; }
.code-box { display: flex; align-items: center; height: 68px; background: #1f0308; border-radius: 6px; padding: 0 0 0 11px; }
.code-label { color: #f2aec0; font-size: 16px; font-weight: 500; line-height: 24px; margin-top: 2px; }
.code-btn { display: flex; align-items: center; margin-left: auto; width: 111px; height: 40px; background: #43222d; border: 0; border-radius: 8px; color: #f2aec0; padding-left: 13px; font-size: 16px; font-weight: 700; line-height: 16px; }
.code-btn svg { width: 14px; height: 14px; color: #e8dfe3; margin-right: 8px; flex: none; }
.slip-tabs { height: 55px; background: #43222c; padding-left: 10px; border-bottom: 1px solid #5a2a38; }
.slip-tab { align-items: center; width: 89px; height: 55px; white-space: nowrap; color: #ffc020; font-size: 15px; font-weight: 700; box-shadow: inset 0 -2px 0 #ffc020; }
.panel { height: 641px; background: #3c1620; }
.empty { height: 150px; padding-top: 17px; border-bottom: 1px solid #5a2a38; text-align: center; }
.empty-circle { display: flex; align-items: center; justify-content: center; width: 56px; height: 56px; margin: 0 auto; background: #2c1219; border-radius: 50%; color: #f3e8eb; }
.empty-circle svg { width: 28px; height: 28px; }
.empty p { margin-top: 9px; font-size: 13.5px; line-height: 16.8px; color: #b5a6ac; white-space: nowrap; }
.top-head { display: flex; align-items: center; height: 65px; padding: 0 8px 2px 46px; }
.trophy { width: 23px; height: 28px; margin-right: 9px; }
.top-head h2 { font-size: 18px; font-weight: 700; color: #fff; white-space: nowrap; }
.top-chev { width: 27px; height: 27px; margin-left: auto; color: #dc9aac; transform: rotate(180deg); }
.stats { display: grid; grid-template-columns: 108px 104px 134px; width: 363px; margin-left: 9px; height: 56px; padding: 9px 0 0 10px; border: 1px solid #5a2a38; border-right: 0; border-radius: 4px 0 0 0; }
.stat { display: flex; flex-direction: column; align-items: center; height: 36px; text-align: center; border-left: 1px solid #5a2a38; }
.stat:first-child { border-left: 0; }
.stat small { font-size: 13.5px; font-weight: 700; line-height: 17px; color: #c8c0c4; }
.stat b { font-size: 15.5px; line-height: 19px; color: #ece6ea; }
.stat em { font-style: normal; font-size: 13.5px; line-height: 19px; font-weight: 700; color: #8f7a82; }
.picks { width: 363px; height: 236px; margin-left: 9px; padding-top: 1px; background: #43222c; border: 1px solid #5a2a38; border-top: 0; border-radius: 0 0 4px 4px; }
.pick { display: flex; align-items: center; height: 52px; padding: 0 14px 0 15px; }
.pick svg { width: 20px; height: 20px; color: #ffbe28; margin-right: 18px; }
.pick-txt { flex: 1; display: flex; flex-direction: column; font-size: 12.5px; font-weight: 700; line-height: 19px; }
.pick-txt strong { color: #e4dee2; }
.pick-txt span { color: #b9adb2; }
.pick b { font-size: 14px; color: #ece6ea; }
.repeat { display: block; margin: 15px 0 0 27px; width: 328px; height: 52px; background: #648c2c; border: 2px solid #f0dc80; border-radius: 26px; color: #fff; font-size: 22px; font-weight: 500; }
.pager { display: flex; align-items: center; justify-content: space-between; margin: 21px 0 0 20px; width: 341px; height: 23px; }
.pg-arrow { width: 13px; height: 23px; }
.pg-l { color: #c08898; } .pg-r { color: #9c6a7a; }
.dots { display: flex; align-items: center; gap: 7px; }
.dot { width: 9px; height: 9px; border-radius: 50%; background: #5c2a38; }
.dot-on { width: 13px; height: 13px; background: #d62850; margin-right: -3px; }
```
